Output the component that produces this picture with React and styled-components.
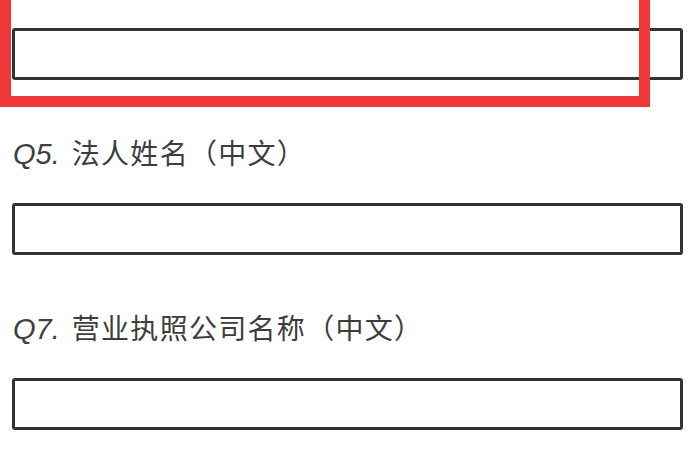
import React from "react";
import styled, { createGlobalStyle } from "styled-components";

const GlobalStyle = createGlobalStyle`
  html, body {
    margin: 0;
    padding: 0;
    background: #ffffff;
  }
  body {
    font-family: "Noto Sans CJK SC", "Noto Sans", sans-serif;
    color: #3c3c3c;
    overflow: hidden;
  }
`;

const Form = styled.div`
  display: flex;
  flex-direction: column;
  gap: 52px;
  padding: 28px 17px 0 12px;
  width: 700px;
  box-sizing: border-box;
`;

const Field = styled.div`
  position: relative;
  display: flex;
  flex-direction: column;
  gap: 31px;
`;

const Label = styled.div`
  height: 40px;
  line-height: 40px;
  font-size: 28px;
  letter-spacing: 1.3px;
  color: #3d3d3d;
  white-space: nowrap;
`;

const Num = styled.span`
  font-family: "Liberation Sans", "Open Sans", sans-serif;
  font-style: italic;
  font-weight: 400;
  font-size: 29px;
  letter-spacing: 0;
  margin-right: 12px;
  margin-left: 1px;
  color: #404040;
`;

const Input = styled.div`
  height: 52px;
  box-sizing: border-box;
  border: 3px solid #333333;
  border-radius: 3px;
  background: #ffffff;
`;

/* red annotation frame drawn over the first answer box */
const Highlight = styled.div`
  position: absolute;
  top: -60px;
  left: -12px;
  right: 33px;
  bottom: -27px;
  border: 11px solid #f03838;
  pointer-events: none;
`;

const questions = [
  { num: "Q5.", text: "法人姓名（中文）" },
  { num: "Q7.", text: "营业执照公司名称（中文）" },
];

export default function App() {
  return (
    <>
      <GlobalStyle />
      <Form>
        <Field>
          <Input />
          <Highlight />
        </Field>
        {questions.map((q) => (
          <Field key={q.num}>
            <Label>
              <Num>{q.num}</Num>
              {q.text}
            </Label>
            <Input />
          </Field>
        ))}
      </Form>
    </>
  );
}
